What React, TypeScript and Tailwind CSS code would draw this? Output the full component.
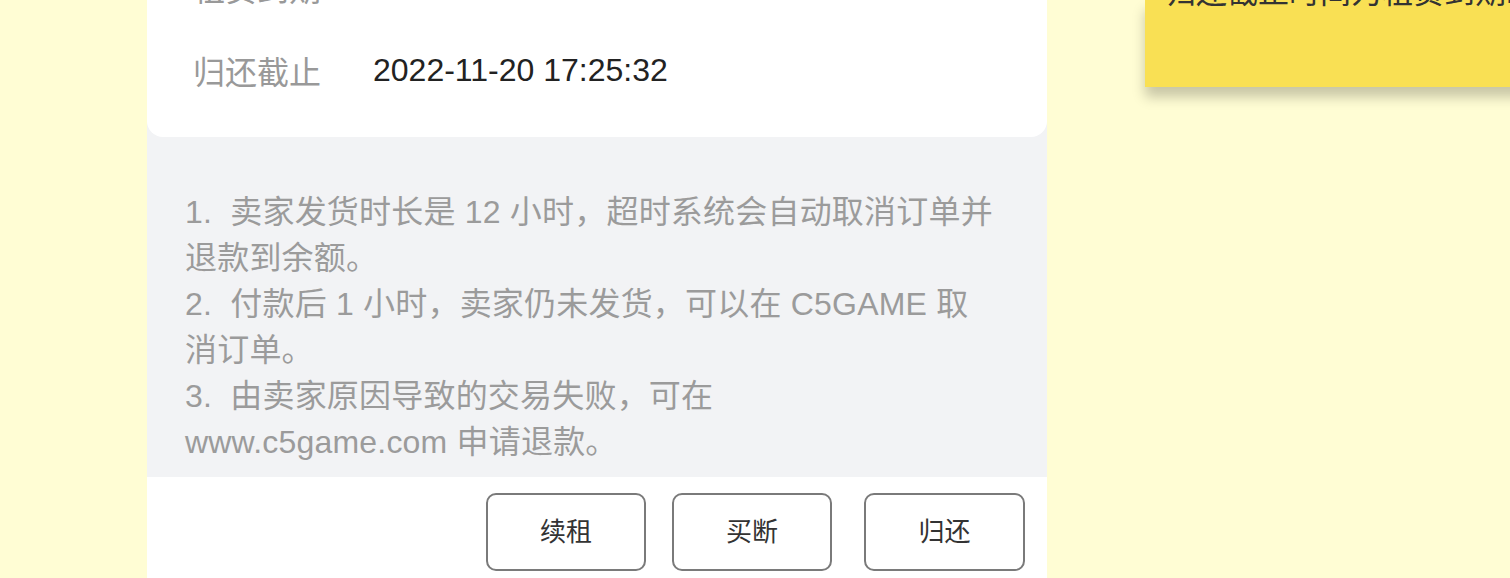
import React from 'react';

const font = { fontFamily: '"Liberation Sans", "Noto Sans CJK SC", sans-serif' };

const tips = [
  '1.  卖家发货时长是 12 小时，超时系统会自动取消订单并',
  '退款到余额。',
  '2.  付款后 1 小时，卖家仍未发货，可以在 C5GAME 取',
  '消订单。',
  '3.  由卖家原因导致的交易失败，可在',
  'www.c5game.com 申请退款。',
];

const actions = [
  { label: '续租', cls: 'w-[160px]' },
  { label: '买断', cls: 'w-[160px] ml-[26px]' },
  { label: '归还', cls: 'w-[161px] ml-[32px]' },
];

const App = () => {
  return (
    <div className="w-[1510px] h-[578px] overflow-hidden bg-[#fffdd4] flex items-start" style={font}>
      <div className="ml-[147px] w-[900px] shrink-0 bg-[#f2f3f5] flex flex-col">
        <div className="bg-white rounded-b-[16px] -mt-[52px] pb-[23px]">
          <div className="h-[83px] flex items-center pl-[46px]">
            <span className="w-[180px] text-[32px] text-[#999999]">租赁到期</span>
          </div>
          <div className="h-[83px] flex items-center pl-[46px]">
            <span className="w-[180px] text-[32px] text-[#999999]">归还截止</span>
            <span className="text-[32px] text-[#222222] -mt-[5px]">2022-11-20 17:25:32</span>
          </div>
        </div>

        <div className="pt-[52px] pb-[12px] pl-[38px] text-[32px] leading-[46px] text-[#9b9b9b] whitespace-pre tracking-[0.2px]">
          {tips.map((line, i) => (
            <div key={i}>{line}</div>
          ))}
        </div>

        <div className="bg-white h-[120px] flex justify-end items-start pt-[16px] pr-[22px]">
          {actions.map((a) => (
            <button
              key={a.label}
              className={`h-[78px] rounded-[10px] border-2 border-[#7a7a7a] bg-white text-[26px] text-[#333333] flex items-center justify-center ${a.cls}`}
            >
              {a.label}
            </button>
          ))}
        </div>
      </div>

      <div className="ml-[98px] w-[420px] shrink-0 h-[87px] bg-[#f9e054] shadow-[0_10px_12px_rgba(0,0,0,0.22)] overflow-hidden">
        <div className="pl-[20px] -mt-[27px] text-[31px] leading-[40px] text-[#333333] whitespace-nowrap">
          归还截止时间为租赁到期时间后
        </div>
      </div>
    </div>
  );
};

export default App;
